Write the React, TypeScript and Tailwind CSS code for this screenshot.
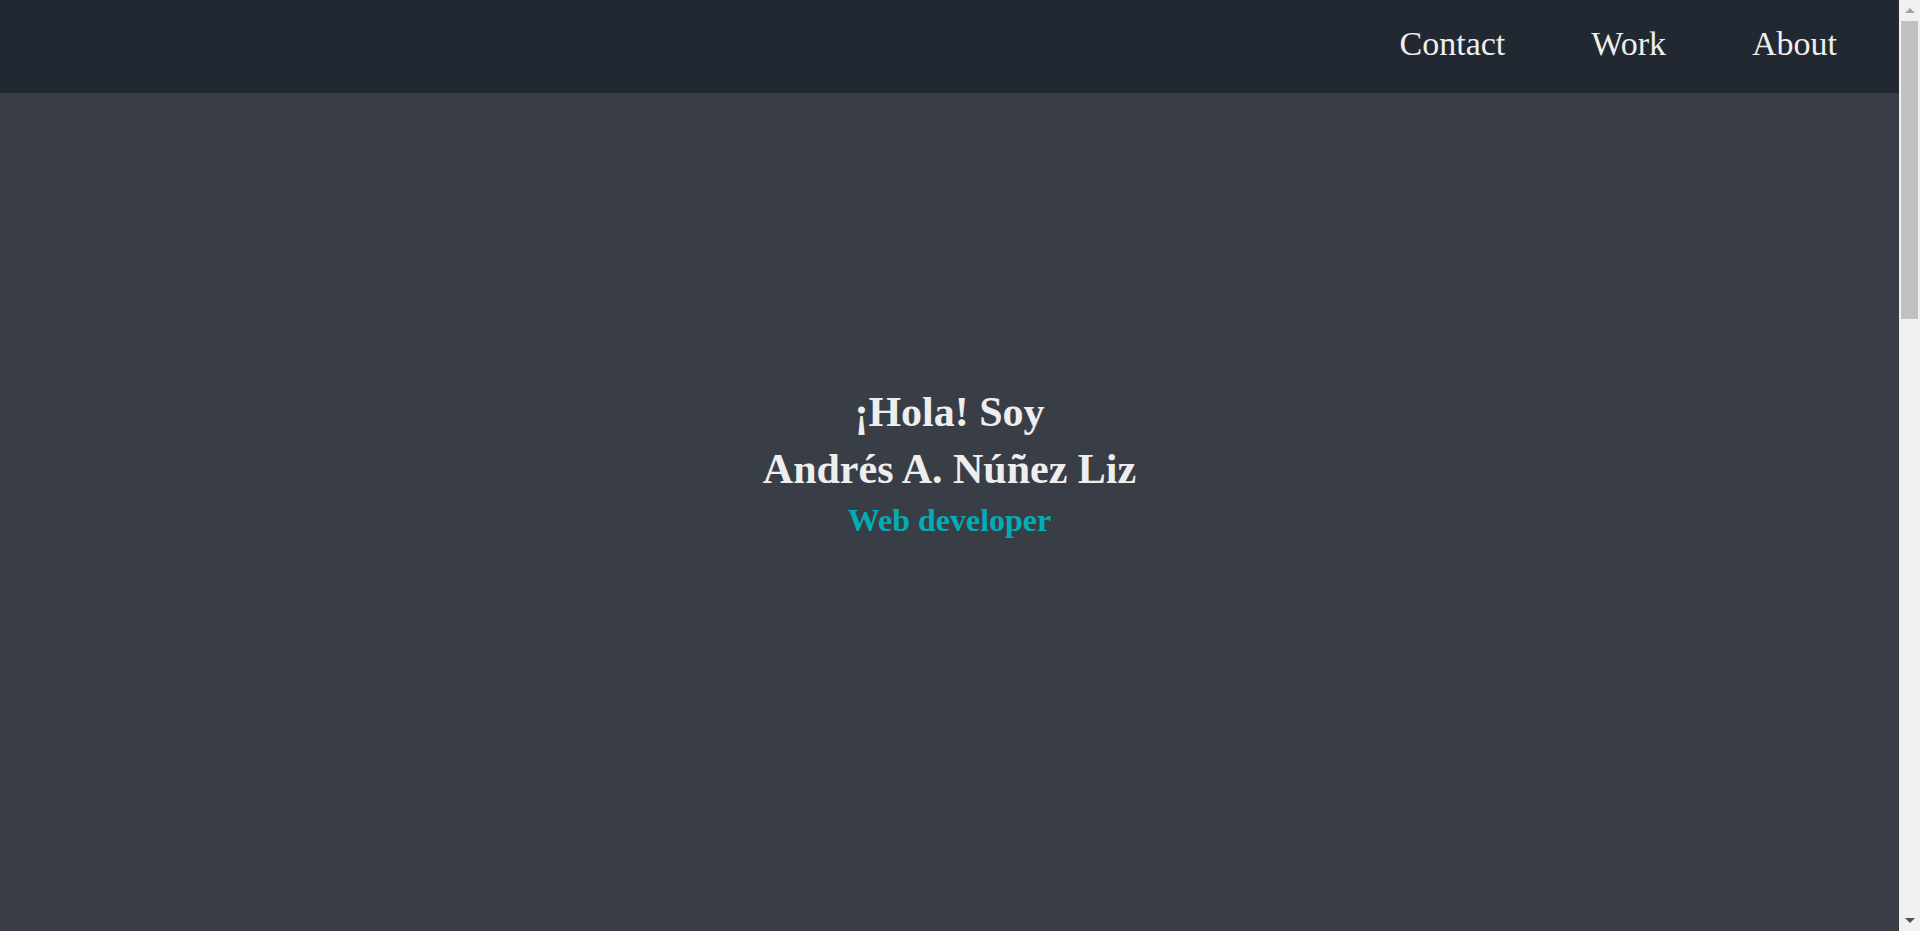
const links = ["Contact", "Work", "About"];

function Scrollbar() {
  return (
    <div aria-hidden="true" className="flex w-[21px] shrink-0 flex-col bg-[#f1f1f1]">
      <div className="flex h-[21px] items-center justify-center">
        <svg width="10" height="5" viewBox="0 0 10 5" fill="#a3a3a3">
          <path d="M0 5 5 0l5 5z" />
        </svg>
      </div>
      <div className="flex flex-1 flex-col px-0.5">
        <div className="h-[298px] bg-[#c1c1c1]" />
      </div>
      <div className="flex h-[21px] items-center justify-center">
        <svg width="10" height="5" viewBox="0 0 10 5" fill="#505050">
          <path d="M0 0h10L5 5z" />
        </svg>
      </div>
    </div>
  );
}

export default function App() {
  return (
    <div className="flex h-screen font-['Liberation_Serif',serif] text-[#eeeeee]">
      <div className="flex min-w-0 flex-1 flex-col bg-[#393e46]">
        <header className="bg-[#222831] pt-6 pr-[62px] pb-[29px]">
          <nav className="flex justify-end gap-[86px] text-[34px] leading-10">
            {links.map((label) => (
              <a key={label} href={`#${label.toLowerCase()}`}>
                {label}
              </a>
            ))}
          </nav>
        </header>
        <main className="flex flex-1 flex-col items-center justify-center pb-[98px] text-center font-bold">
          <h1 className="text-[42px] leading-[57px]">
            ¡Hola! Soy
            <br />
            Andrés A. Núñez Liz
          </h1>
          <h2 className="text-[32px] leading-[45px] text-[#00adb5]">Web developer</h2>
        </main>
      </div>
      <Scrollbar />
    </div>
  );
}
